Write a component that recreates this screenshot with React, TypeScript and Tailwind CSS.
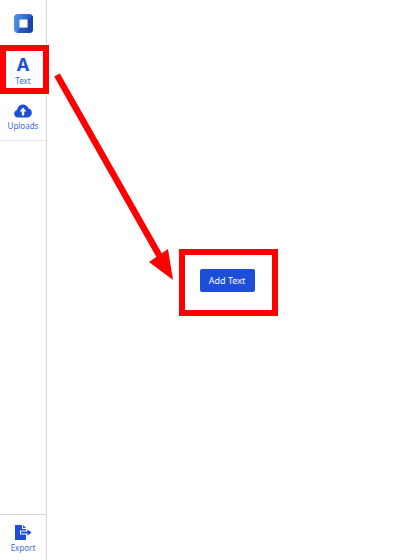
function Logo() {
  return (
    <svg width="19" height="19" viewBox="0 0 19 19">
      <defs>
        <linearGradient id="logoTop" x1="0" y1="0" x2="1" y2="0">
          <stop offset="0" stopColor="#4f90e8" />
          <stop offset="1" stopColor="#1d55c8" />
        </linearGradient>
        <linearGradient id="logoBottom" x1="0" y1="0" x2="1" y2="0">
          <stop offset="0" stopColor="#2a63cf" />
          <stop offset="1" stopColor="#1b3f9e" />
        </linearGradient>
      </defs>
      <rect width="19" height="19" rx="4" fill="url(#logoTop)" />
      <path d="M5.5 13.5 H13.5 V5.5 L19 2 V15 A4 4 0 0 1 15 19 H3 Z" fill="url(#logoBottom)" />
      <rect x="5.5" y="5.5" width="8" height="8" fill="#ffffff" />
    </svg>
  );
}

function CloudIcon() {
  return (
    <svg width="18" height="14" viewBox="0 0 18 14">
      <path
        d="M4.2 13.5C1.9 13.5 0.2 11.8 0.2 9.7c0-1.8 1.2-3.3 2.9-3.7C3.6 2.7 6 0.5 9 0.5c2.6 0 4.8 1.7 5.6 4.1 1.9 0.3 3.2 2 3.2 4 0 2.7-1.9 4.9-4.4 4.9z"
        fill="#1d4ed8"
      />
      <path d="M9 3.6 L12.4 7.4 H10.2 V11.5 H7.8 V7.4 H5.6Z" fill="#ffffff" />
    </svg>
  );
}

function ExportIcon() {
  return (
    <svg width="17" height="15" viewBox="0 0 17 15">
      <path d="M0 0 H7 V4 H11 V5.6 H5 V9.4 H11 V15 H0Z" fill="#1d4ed8" />
      <path d="M8 0 L11 3 H8Z" fill="#1d4ed8" />
      <path d="M6 6.5 H12.5 V4.2 L16.5 7.5 L12.5 10.8 V8.5 H6Z" fill="#1d4ed8" />
    </svg>
  );
}

export default function App() {
  return (
    <div className="relative flex h-[560px] w-[407px] overflow-hidden bg-white font-['Noto_Sans','Open_Sans',sans-serif]">
      <aside className="flex h-full w-[47px] shrink-0 flex-col border-r border-[#d4d6da]">
        <div className="flex h-[46px] items-center justify-center">
          <Logo />
        </div>
        <button className="flex h-[47px] flex-col items-center justify-start pt-[10px]">
          <span className="text-[18px] leading-[16px] font-bold text-[#1d4ed8]">A</span>
          <span className="mt-[3px] text-[8px] leading-[11px] text-[#3b6ae0]">Text</span>
        </button>
        <button className="flex h-[48px] flex-col items-center justify-start border-b border-[#e5e7eb] pt-[11px]">
          <CloudIcon />
          <span className="mt-[2px] text-[8px] leading-[11px] text-[#3b6ae0]">Uploads</span>
        </button>
        <button className="mt-auto flex h-[46px] flex-col items-center justify-start border-t border-[#d4d6da] pt-[10px]">
          <ExportIcon />
          <span className="mt-[2px] text-[8px] leading-[11px] text-[#3b6ae0]">Export</span>
        </button>
      </aside>
      <main className="flex flex-1 items-start justify-center pt-[269px]">
        <button className="h-[23px] w-[55px] rounded-[2px] bg-[#1d4ed8] text-[9px] font-normal text-white">
          Add Text
        </button>
      </main>

      {/* annotation overlays */}
      <div className="absolute top-[45px] left-0 h-[49px] w-[49px] border-[6px] border-[#ff0000]" />
      <div className="absolute top-[249px] left-[179px] h-[67px] w-[99px] border-[6px] border-[#ff0000]" />
      <svg className="absolute top-0 left-0" width="407" height="560" viewBox="0 0 407 560">
        <line x1="57" y1="75" x2="163" y2="262" stroke="#ff0000" strokeWidth="6.5" />
        <path d="M149 262 L168 249 L173 280Z" fill="#ff0000" />
      </svg>
    </div>
  );
}
